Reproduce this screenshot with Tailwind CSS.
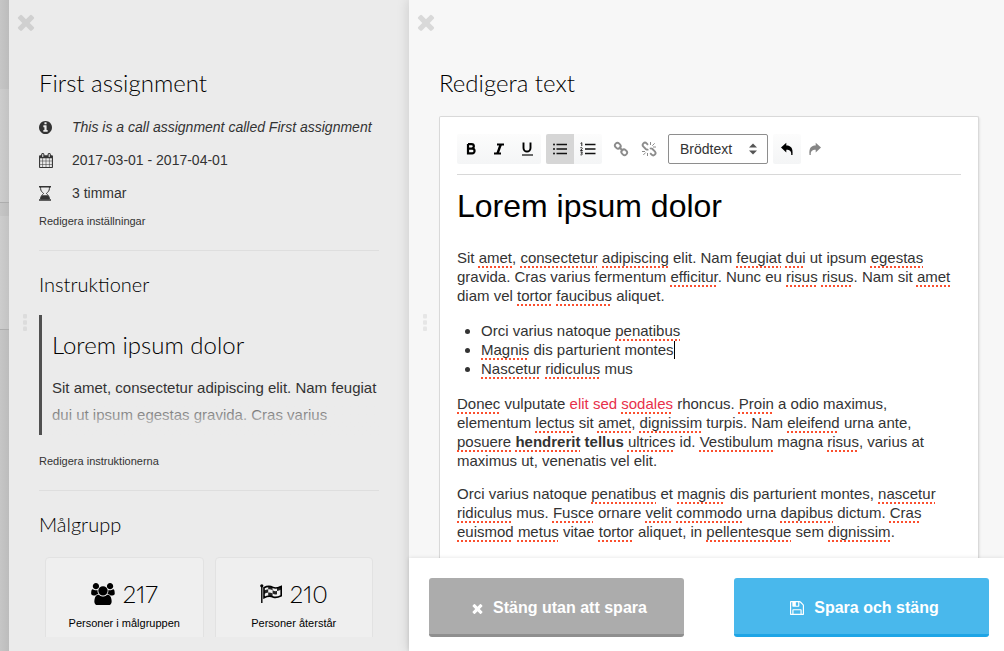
<!DOCTYPE html>
<html lang="sv">
<head>
<meta charset="utf-8">
<title>First assignment</title>
<script src="https://cdn.jsdelivr.net/npm/@tailwindcss/browser@4"></script>
</head>
<body class="font-['Liberation_Sans',sans-serif] text-[#333] bg-[#c4c4c4]">
<svg class="hidden">
  <symbol id="times" viewBox="302 238 1188 1316"><path d="M1490 1322q0 40-28 68l-136 136q-28 28-68 28t-68-28l-294-294-294 294q-28 28-68 28t-68-28l-136-136q-28-28-28-68t28-68l294-294-294-294q-28-28-28-68t28-68l136-136q28-28 68-28t68 28l294 294 294-294q28-28 68-28t68 28l136 136q28 28 28 68t-28 68l-294 294 294 294q28 28 28 68z"/></symbol>
  <symbol id="dots" viewBox="0 0 4 18"><rect width="4" height="4.5" rx="1"/><rect y="6.3" width="4" height="4.5" rx="1"/><rect y="12.6" width="4" height="4.5" rx="1"/></symbol>
</svg>
<div class="flex h-screen overflow-hidden">
  <div class="w-[9px] shrink-0 flex flex-col bg-linear-to-r from-[#c6c6c6] to-[#bcbcbc]">
    <div class="h-[89px]"></div>
    <div class="h-[114px] bg-linear-to-r from-[#cdcdcd] to-[#c3c3c3] border-b border-[#adadad]"></div>
    <div class="h-[13px]"></div>
    <div class="h-[114px] bg-linear-to-r from-[#cdcdcd] to-[#c3c3c3] border-b border-[#adadad]"></div>
  </div>

  <section class="relative w-[400px] shrink-0 flex flex-col bg-[#ebebeb] pt-[13px] pb-3.5">
    <button aria-label="Stäng" class="ml-2 size-[18px] text-[#d0d0d0]"><svg class="size-full" fill="currentColor"><use href="#times"/></svg></button>
    <svg class="absolute left-3.5 top-[314px] w-1 h-[18px] fill-[#dcdcdc]"><use href="#dots"/></svg>
    <div class="flex-1 min-h-0 overflow-hidden pt-9 px-[30px]">
      <h1 class="font-['Lato',sans-serif] font-light text-2xl text-black">First assignment</h1>
      <ul class="mt-3 text-sm leading-[33px]">
        <li class="flex items-center italic">
          <svg class="w-[33px] h-[13px] pr-[20px]" viewBox="128 128 1536 1536" fill="#333"><path d="M1152 1376v-160q0-14-9-23t-23-9h-96v-512q0-14-9-23t-23-9h-320q-14 0-23 9t-9 23v160q0 14 9 23t23 9h96v320h-96q-14 0-23 9t-9 23v160q0 14 9 23t23 9h448q14 0 23-9t9-23zm-128-896v-160q0-14-9-23t-23-9h-192q-14 0-23 9t-9 23v160q0 14 9 23t23 9h192q14 0 23-9t9-23zm640 416q0 209-103 385.500t-279.500 279.500-385.500 103-385.500-103-279.500-279.500-103-385.500 103-385.500 279.500-279.500 385.500-103 385.500 103 279.500 279.500 103 385.500z"/></svg>
          <span>This is a call assignment called First assignment</span>
        </li>
        <li class="flex items-center">
          <svg class="w-[33px] h-[15px] pr-[19px]" viewBox="64 0 1664 1792" fill="#333"><path d="M192 1664h288v-288h-288v288zm352 0h320v-288h-320v288zm-352-352h288v-320h-288v320zm352 0h320v-320h-320v320zm-352-384h288v-288h-288v288zm736 736h320v-288h-320v288zm-384-736h320v-288h-320v288zm768 736h288v-288h-288v288zm-384-352h320v-320h-320v320zm-352-864v-288q0-13-9.500-22.500t-22.500-9.500h-64q-13 0-22.500 9.500t-9.500 22.500v288q0 13 9.500 22.500t22.500 9.500h64q13 0 22.500-9.500t9.500-22.500zm736 864h288v-320h-288v320zm-384-384h320v-288h-320v288zm384 0h288v-288h-288v288zm32-480v-288q0-13-9.500-22.500t-22.500-9.500h-64q-13 0-22.500 9.500t-9.500 22.500v288q0 13 9.500 22.500t22.500 9.500h64q13 0 22.500-9.500t9.500-22.500zm384-64v1280q0 52-38 90t-90 38h-1408q-52 0-90-38t-38-90v-1280q0-52 38-90t90-38h128v-96q0-66 47-113t113-47h64q66 0 113 47t47 113v96h384v-96q0-66 47-113t113-47h64q66 0 113 47t47 113v96h128q52 0 90 38t38 90z"/></svg>
          <span>2017-03-01 - 2017-04-01</span>
        </li>
        <li class="flex items-center">
          <svg class="w-[33px] h-[15px] pr-[21px]" viewBox="0 0 12 15"><path d="M0 .7h12M0 14h12" stroke="#333" stroke-width="1.4"/><path d="M1.600 1v1.500C1.600 5 3.300 6.200 4.600 7.500 3.300 8.800 1.600 10 1.600 13M10.400 1v1.500C10.400 5 8.700 6.200 7.400 7.500c1.300 1.300 3 2.500 3 5.500" fill="none" stroke="#333"/><path d="M1.600 13.500c0-2 .6-3.300 1.700-4.200h5.400c1.100.9 1.700 2.200 1.700 4.200z" fill="#333"/></svg>
          <span>3 timmar</span>
        </li>
      </ul>
      <a href="#" class="block mt-[3px] text-[11px] leading-4">Redigera inställningar</a>

      <h2 class="mt-[21px] pt-[19px] border-t border-[#dedede] font-['Lato',sans-serif] font-light text-xl leading-7 text-black">Instruktioner</h2>
      <div class="relative mt-[17px] h-[120px] overflow-hidden border-l-[3px] border-[#505050] pl-2.5 pt-3.5">
        <h3 class="font-['Lato',sans-serif] font-light text-2xl text-black">Lorem ipsum dolor</h3>
        <p class="mt-[13px] text-[15px] leading-[27px]">Sit amet, consectetur adipiscing elit. Nam feugiat dui ut ipsum egestas gravida. Cras varius</p>
        <div class="absolute inset-x-0 bottom-0 h-10 bg-linear-to-b from-[#ebebeb]/0 to-[#ebebeb]"></div>
      </div>
      <a href="#" class="block mt-[18px] text-[11px] leading-4">Redigera instruktionerna</a>

      <h2 class="mt-[21px] pt-[19px] border-t border-[#dedede] font-['Lato',sans-serif] font-light text-xl leading-7 text-black">Målgrupp</h2>
      <div class="mt-[19px] px-1.5 flex gap-[11px] text-center text-black">
        <div class="flex-1 h-24 rounded border border-[#e2e2e2] bg-[#efefef] pt-5">
          <div class="flex justify-center items-center gap-2 font-['Lato',sans-serif] font-light text-2xl proportional-nums">
            <svg class="w-6 h-[22px]" viewBox="64 0 1920 1792"><path d="M657 896q-162 5-265 128h-134q-82 0-138-40.500t-62-118.500q0-353 124-353 6 0 43.500 21t97.500 42.500 119 21.500q67 0 133-23-5 37-5 66 0 139 81 256zm1071 637q0 120-73 189.500t-194 69.500h-874q-121 0-194-69.500t-73-189.500q0-53 3.500-103.500t14-109 26.500-108.500 43-97.500 62-81 85.500-53.500 111.500-20q10 0 43 21.500t73 48 107 48 135 21.500 135-21.500 107-48 73-48 43-21.500q61 0 111.500 20t85.500 53.500 62 81 43 97.500 26.500 108.500 14 109 3.500 103.500zm-1024-1277q0 106-75 181t-181 75-181-75-75-181 75-181 181-75 181 75 75 181zm704 384q0 159-112.500 271.500t-271.500 112.500-271.500-112.500-112.500-271.500 112.500-271.500 271.500-112.500 271.500 112.500 112.500 271.500zm576 225q0 78-62 118.500t-138 40.500h-134q-103-123-265-128 81-117 81-256 0-29-5-66 66 23 133 23 59 0 119-21.500t97.500-42.500 43.500-21q124 0 124 353zm-128-609q0 106-75 181t-181 75-181-75-75-181 75-181 181-75 181 75 75 181z"/></svg>
            <span>217</span>
          </div>
          <p class="mt-[5px] text-[11px] leading-4">Personer i målgruppen</p>
        </div>
        <div class="flex-1 h-24 rounded border border-[#e2e2e2] bg-[#efefef] pt-5">
          <div class="flex justify-center items-center gap-2 font-['Lato',sans-serif] font-light text-2xl proportional-nums">
            <svg class="w-[22px] h-5" viewBox="0 0 22 20"><circle cx="1.800" cy="1.800" r="1.600"/><path d="M1.100 2h1.400v17H1.100z"/><path d="M4 3.700C7 2 9.500 1.600 13 3.400c3 1.500 5 .4 8.200-1v9.300c-3 1.600-5.200 2.500-8.200 1.200-3.500-1.600-6-.8-9 .8z" fill="none" stroke="#000" stroke-width="1.600"/><path d="M8.200 2.200c1.600-.2 3 .2 4.400 1v3.100c-1.400-.8-2.800-1.200-4.400-1zM4 6.500c1.500-.8 2.800-1.200 4.200-1.300v3.300C6.800 8.600 5.500 9 4 9.900zM12.600 6.300c1.600.9 2.900 1 4.400.7v3.200c-1.500.4-2.800.3-4.400-.6zM8.200 8.500c1.600-.2 3 .3 4.400 1.100v3.100c-1.400-.7-2.800-1.100-4.400-.9zM17 3.500c1.400-.3 2.700-.9 4.200-1.600v3.500C19.700 6.200 18.400 6.800 17 7z" opacity=".85"/></svg>
            <span>210</span>
          </div>
          <p class="mt-[5px] text-[11px] leading-4">Personer återstår</p>
        </div>
      </div>
    </div>
  </section>

  <section class="relative flex-1 min-w-0 flex flex-col bg-[#f7f7f7] shadow-[0_0_12px_rgba(0,0,0,0.15)] pt-[13px]">
    <button aria-label="Stäng" class="ml-2 size-[18px] text-[#d9d9d9]"><svg class="size-full" fill="currentColor"><use href="#times"/></svg></button>
    <svg class="absolute left-3.5 top-[314px] w-1 h-[18px] fill-[#e6e6e6]"><use href="#dots"/></svg>
    <div class="flex-1 min-h-0 overflow-hidden flex flex-col pt-9 pl-[30px] pr-[25px]">
      <h1 class="font-['Lato',sans-serif] font-light text-2xl text-black">Redigera text</h1>
      <div class="mt-[17px] flex-1 rounded-t-xs border border-b-0 border-[#d9d9d9] bg-white px-[17px] pt-[17px] shadow-[1px_1px_2px_rgba(0,0,0,0.08)]">
        <div class="flex items-center pb-2.5 border-b border-[#d8d8d8]">
          <div class="flex rounded-xs bg-linear-to-b from-[#fcfcfc] to-[#f4f5f6] text-black">
            <button aria-label="Fet" class="w-7 h-[30px] grid place-items-center"><svg width="14" height="14" fill="none" stroke="#000" stroke-width="2.200"><path d="M4 2.100h3.600a2.200 2.200 0 0 1 0 4.500H4m0 0h4.200a2.300 2.300 0 0 1 0 4.700H4V2"/></svg></button>
            <button aria-label="Kursiv" class="w-7 h-[30px] grid place-items-center"><svg width="14" height="14" fill="none" stroke="#000"><path d="M5 2.500h7M2 11.500h7" stroke-width="1.800"/><path d="M8.700 2.500l-3.200 9" stroke-width="2.400"/></svg></button>
            <button aria-label="Understruken" class="w-7 h-[30px] grid place-items-center"><svg width="14" height="16" fill="none" stroke="#000"><path d="M3.500 1.500v5.500a3.500 3.500 0 0 0 7 0V1.500" stroke-width="1.900"/><path d="M2 14h11" stroke="#444" stroke-width="1.600"/></svg></button>
          </div>
          <div class="ml-[5px] flex rounded-xs bg-linear-to-b from-[#fcfcfc] to-[#f4f5f6]">
            <button aria-label="Punktlista" aria-pressed="true" class="w-7 h-[30px] grid place-items-center rounded-l-xs bg-[#d6d6d6]"><svg width="14" height="14" fill="#111"><circle cx="1" cy="2.500" r="1"/><circle cx="1" cy="7" r="1"/><circle cx="1" cy="11.500" r="1"/><path d="M3.500 1.800H14v1.400H3.500zM3.500 6.300H14v1.400H3.500zM3.500 10.800H14v1.400H3.500z"/></svg></button>
            <button aria-label="Numrerad lista" class="w-7 h-[30px] grid place-items-center"><svg width="16" height="14" fill="#111"><path d="M5 1.800h10.500v1.400H5zM5 6.300h10.500v1.400H5zM5 10.800h10.500v1.400H5z"/><path d="M.6 1.400l1.200-.7V4M.4 5.800c.8-.7 2.300-.2 1.700.8L.5 8.500h2.200M.5 10h1.900l-1 1.300c1.600.1 1.200 2-.9 1.500" fill="none" stroke="#222"/></svg></button>
          </div>
          <div class="ml-[5px] flex">
            <button aria-label="Länk" class="w-7 h-[30px] grid place-items-center"><svg width="16" height="16" fill="none" stroke="#8c8c8c" stroke-width="1.900"><rect x="1.800" y="2.300" width="6" height="5" rx="2.500" transform="rotate(45 4.800 4.800)"/><rect x="8.200" y="8.700" width="6" height="5" rx="2.500" transform="rotate(45 11.200 11.200)"/><path d="M6 6l4 4"/></svg></button>
            <button aria-label="Ta bort länk" class="w-7 h-[30px] grid place-items-center"><svg width="16" height="16" fill="none" stroke="#8c8c8c"><path d="M7 3.800L5.600 2.400a2.200 2.200 0 0 0-3.200 3.200L5 8.200q1.200.8 2.300 0M9.200 12.200l1.400 1.400a2.200 2.200 0 0 0 3.200-3.200L11.200 7.800q-1.200-.8-2.300 0" stroke-width="1.900"/><path d="M9.500 1v3M11.300 4.700l2.400-2.400M12 6h3M1 10.500h3M2.300 14l2.400-2.500M6.500 12v3" stroke-width="1"/></svg></button>
          </div>
          <div class="relative ml-[5px]">
            <select aria-label="Textformat" class="block appearance-none w-[100px] h-[30px] rounded-xs border border-[#8e8e8e] bg-white pl-[11px] text-sm text-[#333]"><option>Brödtext</option></select>
            <svg class="absolute right-[11px] top-[9px] pointer-events-none" width="8" height="12" fill="#555"><path d="M0 4.500L4 .5l4 4zM0 7.500h8l-4 4z"/></svg>
          </div>
          <button aria-label="Ångra" class="ml-[5px] w-7 h-[30px] grid place-items-center rounded-xs bg-linear-to-b from-[#fcfcfc] to-[#f4f5f6]"><svg width="14" height="14" fill="#000"><path d="M1 5.500L6.300.800v2.800c4.400 0 6.900 2.400 6.200 9.400h-1.300c.3-3.800-1.200-5.300-4.900-5.300v2.700z"/></svg></button>
          <button aria-label="Gör om" class="w-7 h-[30px] grid place-items-center"><svg width="14" height="14" fill="#858585"><path d="M13 5.500L7.700.800v2.800C3.300 3.600.8 6 1.500 13h1.300c-.3-3.800 1.200-5.300 4.900-5.300v2.700z"/></svg></button>
        </div>
        <div contenteditable="true" spellcheck="false" role="textbox" aria-multiline="true" aria-label="Text" class="pt-[11px] text-[15px] leading-[19px] outline-none [&_u]:decoration-dotted [&_u]:decoration-[#fb4f2e] [&_u]:decoration-2 [&_u]:underline-offset-[3px] [&_u]:[text-decoration-skip-ink:none]">
          <h2 class="text-[32px] leading-10 text-black">Lorem ipsum dolor</h2>
          <p class="mt-[22px]">Sit <u>amet</u>, <u>consectetur</u> <u>adipiscing</u> elit. Nam <u>feugiat</u> <u>dui</u> ut ipsum <u>egestas</u><br>gravida. Cras varius fermentum <u>efficitur</u>. Nunc eu <u>risus</u> <u>risus</u>. Nam sit <u>amet</u><br>diam vel <u>tortor</u> <u>faucibus</u> aliquet.</p>
          <ul class="mt-4 pl-6 list-disc">
            <li>Orci varius natoque <u>penatibus</u></li>
            <li><u>Magnis</u> dis parturient montes<span class="inline-block w-px h-[18px] -mb-1 bg-black"></span></li>
            <li><u>Nascetur</u> <u>ridiculus</u> mus</li>
          </ul>
          <p class="mt-4"><u>Donec</u> vulputate <span class="text-[#e8304a]">elit sed <u>sodales</u></span> rhoncus. <u>Proin</u> a odio maximus,<br>elementum <u>lectus</u> sit <u>amet</u>, <u>dignissim</u> turpis. Nam <u>eleifend</u> urna ante,<br><u>posuere</u> <b><u>hendrerit</u> tellus</b> <u>ultrices</u> id. <u>Vestibulum</u> magna <u>risus</u>, varius at<br>maximus ut, venenatis vel elit.</p>
          <p class="mt-3.5">Orci varius natoque <u>penatibus</u> et <u>magnis</u> dis parturient montes, <u>nascetur</u><br><u>ridiculus</u> mus. <u>Fusce</u> ornare <u>velit</u> <u>commodo</u> urna <u>dapibus</u> dictum. <u>Cras</u><br><u>euismod</u> <u>metus</u> vitae <u>tortor</u> aliquet, in <u>pellentesque</u> sem <u>dignissim</u>.</p>
        </div>
      </div>
    </div>
    <footer class="relative flex gap-[50px] bg-white pl-5 pr-[15px] pt-5 pb-3.5 shadow-[0_0_4px_rgba(0,0,0,0.12)] text-base font-bold text-white">
      <button class="flex-1 h-[59px] pt-1 pl-1.5 flex items-center justify-center gap-2.5 rounded-[3px] bg-[#acacac] border-b-3 border-[#8f8f8f]"><svg class="size-[11px]" fill="currentColor"><use href="#times"/></svg>Stäng utan att spara</button>
      <button class="flex-1 h-[59px] pt-1 pl-1.5 flex items-center justify-center gap-2.5 rounded-[3px] bg-[#49b8ec] border-b-3 border-[#1ea5e6]"><svg class="size-3.5" viewBox="128 128 1536 1536" fill="currentColor"><path d="M512 1536h768v-384h-768v384zm896 0h128v-896q0-14-10-38.500t-20-34.500l-281-281q-10-10-34-20t-39-10v416q0 40-28 68t-68 28h-576q-40 0-68-28t-28-68v-416h-128v1280h128v-416q0-40 28-68t68-28h832q40 0 68 28t28 68v416zm-384-928v-320q0-13-9.500-22.500t-22.500-9.500h-192q-13 0-22.500 9.500t-9.500 22.500v320q0 13 9.500 22.500t22.500 9.500h192q13 0 22.500-9.500t9.500-22.500zm640 32v928q0 40-28 68t-68 28h-1344q-40 0-68-28t-28-68v-1344q0-40 28-68t68-28h928q40 0 88 20t76 48l280 280q28 28 48 76t20 88z"/></svg>Spara och stäng</button>
    </footer>
  </section>
</div>
</body>
</html>
